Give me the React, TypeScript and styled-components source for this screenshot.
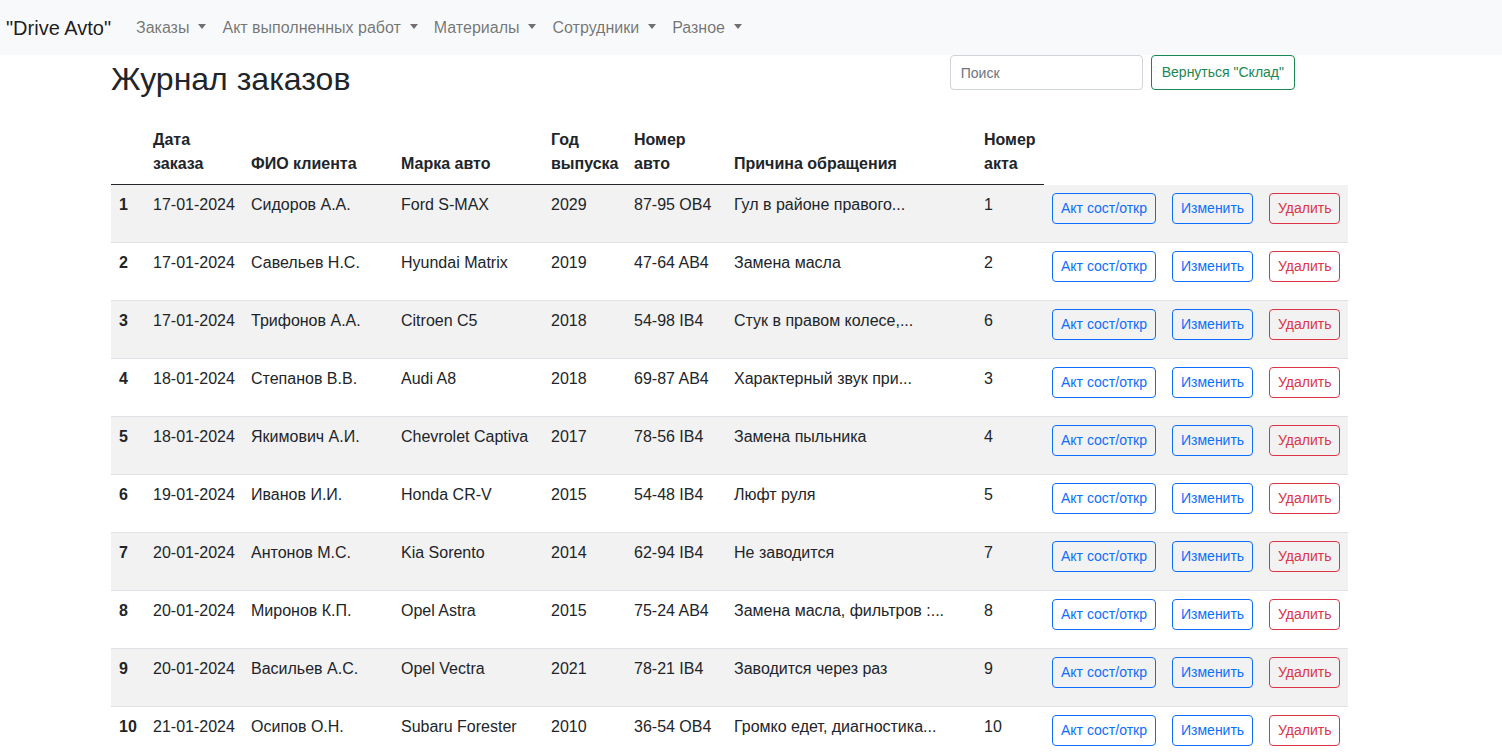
import React from 'react';
import styled, { createGlobalStyle } from 'styled-components';

const GlobalStyle = createGlobalStyle`
  body {
    margin: 0;
    font-family: "Liberation Sans", Arial, sans-serif;
    font-size: 16px;
    line-height: 1.5;
    color: #212529;
    background: #fff;
  }
  * { box-sizing: border-box; }
`;

const Navbar = styled.nav`
  display: flex;
  align-items: center;
  height: 55px;
  padding: 0 6px;
  background-color: #f8f9fa;
`;

const Brand = styled.a`
  font-size: 20px;
  line-height: 30px;
  color: rgba(0, 0, 0, 0.9);
  margin-right: 17px;
  text-decoration: none;
`;

const NavLink = styled.a`
  display: flex;
  align-items: center;
  padding: 8px;
  color: rgba(0, 0, 0, 0.55);
  text-decoration: none;

  &::after {
    content: '';
    display: inline-block;
    margin-left: 9px;
    border-top: 5px solid;
    border-left: 4.5px solid transparent;
    border-right: 4.5px solid transparent;
    position: relative;
    top: -1px;
  }
`;

const Header = styled.div`
  display: flex;
  align-items: flex-start;
  margin-left: 111px;
  width: 1184px;
  height: 65px;
`;

const Title = styled.h1`
  flex: 1;
  margin: 5px 0 0;
  font-size: 32px;
  font-weight: 400;
  line-height: 1.2;
`;

const Search = styled.input`
  width: 193px;
  height: 35px;
  margin-right: 8px;
  padding: 0 10px;
  font-family: inherit;
  font-size: 14px;
  color: #212529;
  border: 1px solid #ced4da;
  border-radius: 4px;

  &::placeholder {
    color: #6c757d;
  }
`;

const Button = styled.button<{ $tone: 'primary' | 'danger' | 'success' }>`
  font-family: inherit;
  font-size: 14px;
  line-height: 21px;
  padding: 4px 8px;
  background: transparent;
  border-radius: 4px;
  white-space: nowrap;
  cursor: pointer;
  color: ${(p) => (p.$tone === 'primary' ? '#0d6efd' : p.$tone === 'danger' ? '#dc3545' : '#198754')};
  border: 1px solid ${(p) => (p.$tone === 'primary' ? '#0d6efd' : p.$tone === 'danger' ? '#dc3545' : '#198754')};
`;

const BackButton = styled(Button)`
  height: 35px;
  padding: 0 10px;
`;

const Table = styled.table`
  margin-left: 111px;
  width: 1237px;
  border-collapse: collapse;
  table-layout: fixed;
`;

const Th = styled.th`
  padding: 8px;
  text-align: left;
  vertical-align: bottom;
  font-weight: 700;
  line-height: 24px;
  border-bottom: 1px solid #212529;
`;

const Row = styled.tr<{ $striped: boolean }>`
  background: ${(p) => (p.$striped ? '#f2f2f2' : '#fff')};
  border-bottom: 1px solid #dee2e6;
`;

const Td = styled.td<{ $bold?: boolean }>`
  padding: 8px;
  height: 58px;
  vertical-align: top;
  white-space: nowrap;
  overflow: hidden;
  font-weight: ${(p) => (p.$bold ? 700 : 400)};
`;

const widths = [34, 98, 150, 150, 83, 100, 250, 68, 120, 97, 87];

const orders = [
  ['17-01-2024', 'Сидоров А.А.', 'Ford S-MAX', '2029', '87-95 OB4', 'Гул в районе правого...', '1'],
  ['17-01-2024', 'Савельев Н.С.', 'Hyundai Matrix', '2019', '47-64 AB4', 'Замена масла', '2'],
  ['17-01-2024', 'Трифонов А.А.', 'Citroen C5', '2018', '54-98 IB4', 'Стук в правом колесе,...', '6'],
  ['18-01-2024', 'Степанов В.В.', 'Audi A8', '2018', '69-87 AB4', 'Характерный звук при...', '3'],
  ['18-01-2024', 'Якимович А.И.', 'Chevrolet Captiva', '2017', '78-56 IB4', 'Замена пыльника', '4'],
  ['19-01-2024', 'Иванов И.И.', 'Honda CR-V', '2015', '54-48 IB4', 'Люфт руля', '5'],
  ['20-01-2024', 'Антонов М.С.', 'Kia Sorento', '2014', '62-94 IB4', 'Не заводится', '7'],
  ['20-01-2024', 'Миронов К.П.', 'Opel Astra', '2015', '75-24 AB4', 'Замена масла, фильтров :...', '8'],
  ['20-01-2024', 'Васильев А.С.', 'Opel Vectra', '2021', '78-21 IB4', 'Заводится через раз', '9'],
  ['21-01-2024', 'Осипов О.Н.', 'Subaru Forester', '2010', '36-54 OB4', 'Громко едет, диагностика...', '10'],
];

const headers = ['', 'Дата заказа', 'ФИО клиента', 'Марка авто', 'Год выпуска', 'Номер авто', 'Причина обращения', 'Номер акта'];

const App: React.FC = () => {
  return (
    <>
      <GlobalStyle />
      <Navbar>
        <Brand href="#">"Drive Avto"</Brand>
        {['Заказы', 'Акт выполненных работ', 'Материалы', 'Сотрудники', 'Разное'].map((l) => (
          <NavLink key={l} href="#">{l}</NavLink>
        ))}
      </Navbar>
      <Header>
        <Title>Журнал заказов</Title>
        <Search placeholder="Поиск" />
        <BackButton $tone="success">Вернуться "Склад"</BackButton>
      </Header>
      <Table>
        <colgroup>
          {widths.map((w, i) => (
            <col key={i} style={{ width: w }} />
          ))}
        </colgroup>
        <thead>
          <tr>
            {headers.map((h, i) => (
              <Th key={i}>{h}</Th>
            ))}
          </tr>
        </thead>
        <tbody>
          {orders.map((o, i) => (
            <Row key={i} $striped={i % 2 === 0}>
              <Td $bold>{i + 1}</Td>
              {o.map((c, j) => (
                <Td key={j}>{c}</Td>
              ))}
              <Td><Button $tone="primary">Акт сост/откр</Button></Td>
              <Td><Button $tone="primary">Изменить</Button></Td>
              <Td><Button $tone="danger">Удалить</Button></Td>
            </Row>
          ))}
        </tbody>
      </Table>
    </>
  );
};

export default App;
